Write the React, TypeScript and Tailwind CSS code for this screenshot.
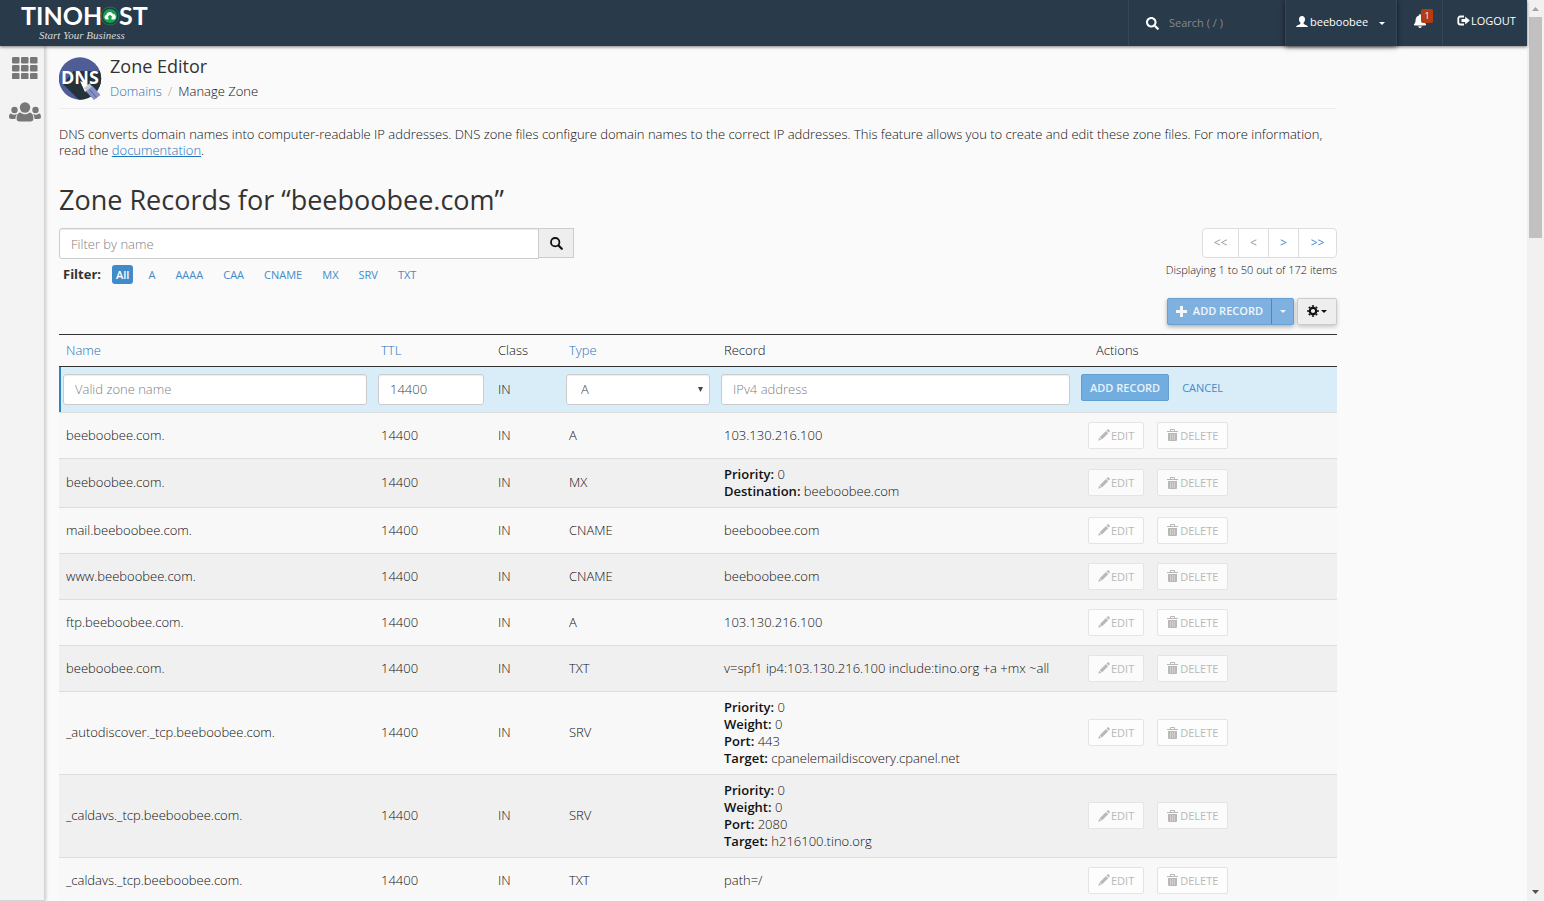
import React, { useState } from "react"
import { FaBell, FaSearch } from "react-icons/fa"

type RecordField = {
  label: string
  value: string
}

type ZoneRecord = {
  name: string
  type: string
  value?: string
  fields?: RecordField[]
}

const FILTERS = ["All", "A", "AAAA", "CAA", "CNAME", "MX", "SRV", "TXT"]

const RECORDS: ZoneRecord[] = [
  { name: "beeboobee.com.", type: "A", value: "103.130.216.100" },
  {
    name: "beeboobee.com.",
    type: "MX",
    fields: [
      { label: "Priority", value: "0" },
      { label: "Destination", value: "beeboobee.com" },
    ],
  },
  { name: "mail.beeboobee.com.", type: "CNAME", value: "beeboobee.com" },
  { name: "www.beeboobee.com.", type: "CNAME", value: "beeboobee.com" },
  { name: "ftp.beeboobee.com.", type: "A", value: "103.130.216.100" },
  {
    name: "beeboobee.com.",
    type: "TXT",
    value: "v=spf1 ip4:103.130.216.100 include:tino.org +a +mx ~all",
  },
  {
    name: "_autodiscover._tcp.beeboobee.com.",
    type: "SRV",
    fields: [
      { label: "Priority", value: "0" },
      { label: "Weight", value: "0" },
      { label: "Port", value: "443" },
      { label: "Target", value: "cpanelemaildiscovery.cpanel.net" },
    ],
  },
  {
    name: "_caldavs._tcp.beeboobee.com.",
    type: "SRV",
    fields: [
      { label: "Priority", value: "0" },
      { label: "Weight", value: "0" },
      { label: "Port", value: "2080" },
      { label: "Target", value: "h216100.tino.org" },
    ],
  },
  { name: "_caldavs._tcp.beeboobee.com.", type: "TXT", value: "path=/" },
]

const Logo = () => (
  <svg width="128" height="42" viewBox="0 0 128 42" role="img" aria-label="Tino Host">
    <g fill="#fff" fontFamily="Lato, sans-serif" fontWeight="700" fontSize="25">
      <text x="1" y="25">TINO</text>
      <text x="63" y="25">H</text>
      <text x="99" y="25">ST</text>
    </g>
    <circle cx="90" cy="16" r="9" fill="#293a4a" stroke="#1c7a4c" strokeWidth="1" />
    <circle cx="90" cy="16" r="7" fill="#16a34a" />
    <path
      d="M86.5 19.500a2.300 2.300 0 0 1-.3-4.500 3.600 3.600 0 0 1 6.800-1 2.800 2.800 0 0 1 .8 5.500h-2.300v-2.200h1.200l-2.700-2.600-2.700 2.600h1.200v2.200z"
      fill="#fff"
    />
    <text
      x="19"
      y="39"
      fill="#d5dade"
      fontFamily="'Liberation Serif', serif"
      fontStyle="italic"
      fontSize="11"
    >
      Start Your Business
    </text>
  </svg>
)

const DnsIcon = () => (
  <svg width="43" height="43" viewBox="0 0 43 43" aria-hidden="true">
    <defs>
      <clipPath id="dns-disc">
        <circle cx="21" cy="21.5" r="21.2" />
      </clipPath>
    </defs>
    <g clipPath="url(#dns-disc)">
      <rect width="43" height="43" fill="#4f5d97" />
      <path d="M4 27 15 14h28v29H20z" fill="#26323a" />
    </g>
    <text
      x="2"
      y="27"
      fill="#fff"
      fontFamily="'Open Sans', sans-serif"
      fontWeight="700"
      fontSize="18"
    >
      DNS
    </text>
    <path d="M21 24l11 5-6 6z" fill="#fff" />
    <path d="M25 31l5.500-4.500 3 3.500-5.500 4.500z" fill="#c9ccd3" />
    <path d="M27 34.500l6.500-5.500 8 9-6.500 5z" fill="#8790c4" />
    <path d="M30.500 32.500l7 8" stroke="#4f5d97" strokeWidth="1" />
  </svg>
)

const GridIcon = () => (
  <svg width="26" height="22" viewBox="0 0 26 22" fill="#777" aria-hidden="true">
    {[0, 8, 16].map((y) =>
      [0, 9, 18].map((x) => (
        <rect key={`${x}-${y}`} x={x} y={y} width="7.500" height="6.500" rx="1.300" />
      ))
    )}
  </svg>
)

const UsersIcon = () => (
  <svg width="32" height="20" viewBox="0 0 32 20" fill="#777" aria-hidden="true">
    <circle cx="5.500" cy="8" r="3.200" />
    <circle cx="26.500" cy="8" r="3.200" />
    <circle cx="16" cy="5.500" r="5.200" />
    <path d="M2 11.500c2 1.500 4 1.500 6.300.5-1.200 1.300-1.800 3-1.900 5H2.500C1 17 0 16.200 0 15c0-1.500.5-3.500 2-3.500z" />
    <path d="M30 11.500c-2 1.500-4 1.500-6.300.5 1.200 1.300 1.800 3 1.900 5h3.900c1.500 0 2.500-.8 2.500-2 0-1.500-.5-3.500-2-3.500z" />
    <path d="M11.300 10.500c3 2.400 6.400 2.400 9.400 0 2.700.3 3.700 3 3.700 6.200 0 1.700-1.100 2.800-2.900 2.800h-11c-1.800 0-2.900-1.100-2.900-2.800 0-3.200 1-5.900 3.700-6.200z" />
  </svg>
)

const UserIcon = () => (
  <svg width="12" height="12" viewBox="0 0 12 12" fill="currentColor" aria-hidden="true">
    <path d="M6 0c1.900 0 3 1.400 3 3.300 0 1.300-.5 2.600-1.400 3.300-.2.800 0 1.400.6 1.700l2.600 1.200c.8.400 1.200.8 1.200 1.500H0c0-.7.400-1.100 1.200-1.500l2.600-1.200c.6-.3.800-.9.600-1.700C3.500 5.900 3 4.600 3 3.300 3 1.400 4.100 0 6 0z" />
  </svg>
)

const LogoutIcon = () => (
  <svg width="13" height="12" viewBox="0 0 13 12" aria-hidden="true">
    <path
      d="M7 1.500H3.300A2 2 0 0 0 1.300 3.500v4a2 2 0 0 0 2 2H7"
      fill="none"
      stroke="currentColor"
      strokeWidth="1.800"
    />
    <path d="M4.500 4h3.700V1.500l4.600 4-4.600 4V7H4.500z" fill="currentColor" />
  </svg>
)

const PencilIcon = () => (
  <svg width="12" height="12" viewBox="0 0 12 12" fill="currentColor" aria-hidden="true">
    <path d="M9.400.6c.4-.4.900-.4 1.300 0l.9.900c.4.400.4.900 0 1.300l-.8.800-2.200-2.200zM8 2l2.200 2.200-6.300 6.200-2.200-2.200zM1.200 8.800l2 2L.3 11.800z" />
  </svg>
)

const TrashIcon = () => (
  <svg width="11" height="12" viewBox="0 0 11 12" aria-hidden="true">
    <path
      d="M3.500 2V.5h4V2M0 2.500h11"
      fill="none"
      stroke="currentColor"
      strokeWidth="1"
    />
    <path d="M1 4h9v7a1 1 0 0 1-1 1H2a1 1 0 0 1-1-1z" fill="currentColor" />
    <path d="M3.500 5v6M5.500 5v6M7.500 5v6" stroke="#f8f8f8" strokeWidth=".4" />
  </svg>
)

const SearchIcon = () => (
  <svg width="13" height="13" viewBox="0 0 13 13" aria-hidden="true">
    <circle cx="5.200" cy="5.200" r="4.200" fill="none" stroke="currentColor" strokeWidth="1.800" />
    <path d="M8.500 8.500l3.300 3.300" stroke="currentColor" strokeWidth="2.200" strokeLinecap="round" />
  </svg>
)

const PlusIcon = () => (
  <svg width="11" height="11" viewBox="0 0 11 11" fill="currentColor" aria-hidden="true">
    <path d="M4 0h3v4h4v3H7v4H4V7H0V4h4z" />
  </svg>
)

const GearIcon = () => (
  <svg width="12" height="12" viewBox="0 0 12 12" fill="none" stroke="currentColor" aria-hidden="true">
    <circle cx="6" cy="6" r="3.200" strokeWidth="2.200" />
    <path
      d="M6 .3v1.500M6 10.200v1.500M.3 6h1.500M10.200 6h1.500M2 2l1 1M9 9l1 1M2 10l1-1M9 3l1-1"
      strokeWidth="2.200"
    />
  </svg>
)

const Caret = () => (
  <svg width="6" height="3" viewBox="0 0 6 3" fill="currentColor" aria-hidden="true">
    <path d="M0 0h6L3 3z" />
  </svg>
)

const Header = () => (
  <header className="relative z-20 flex h-[46px] shrink-0 items-stretch bg-[#293a4a] font-normal text-white shadow-[0_1px_3px_rgba(0,0,0,0.5)]">
    <a href="#home" className="ml-5">
      <Logo />
    </a>
    <label className="ml-auto flex w-[157px] items-center gap-[10px] border-l border-[#33475a] pl-[17px]">
      <FaSearch size={13} />
      <input
        type="text"
        aria-label="Search"
        placeholder="Search ( / )"
        className="w-24 bg-transparent text-[11px] outline-none placeholder:text-[#84898e]"
      />
    </label>
    <button className="flex w-[112px] items-center gap-[2px] border-x border-[#33475a] pb-[2px] pl-[10px] text-[11px] shadow-[0_1px_5px_rgba(0,0,0,0.6)]">
      <UserIcon />
      <span>beeboobee</span>
      <span className="ml-[9px] pt-[3px]">
        <Caret />
      </span>
    </button>
    <button className="relative w-[46px] border-r border-[#33475a] pb-[5px] pl-4" aria-label="Notifications">
      <FaBell size={14} />
      <span className="absolute top-[9px] left-6 flex h-[14px] w-3 items-center justify-center rounded-[2px] bg-[#b33c12] text-[9px]">
        1
      </span>
    </button>
    <a href="#logout" className="flex w-[84px] items-center gap-px pb-1 pl-[14px] text-[11px]">
      <LogoutIcon />
      LOGOUT
    </a>
  </header>
)

const Sidebar = () => (
  <nav className="relative z-10 flex w-[45px] shrink-0 flex-col items-center gap-[23px] border-r border-b border-[#d5d5d5] bg-[#f3f3f3] pt-[11px] pl-[6px] shadow-[1px_0_3px_rgba(0,0,0,0.2)]">
    <a href="#tools" aria-label="Tools">
      <GridIcon />
    </a>
    <a href="#users" aria-label="Users">
      <UsersIcon />
    </a>
  </nav>
)

const inputClass =
  "h-[31px] w-full rounded-[3px] border border-[#ccc] bg-white px-[11px] text-[13px] text-[#444] shadow-[inset_0_1px_1px_rgba(0,0,0,0.075)] placeholder:text-[#808080]"

const AddRecordRow = () => {
  const [ttl, setTtl] = useState<string>("14400")
  const [type, setType] = useState<string>("A")

  return (
    <tr className="h-[46px] border-b border-[#ddd] bg-[#d9edf9]">
      <td className="pr-[6px] pl-1 shadow-[inset_2px_0_0_#2f86bf]">
        <input className={inputClass} aria-label="Zone name" placeholder="Valid zone name" />
      </td>
      <td className="pr-[6px] pl-[5px]">
        <input
          className={inputClass}
          aria-label="TTL"
          value={ttl}
          onChange={(e) => setTtl(e.target.value)}
        />
      </td>
      <td className="pl-2">IN</td>
      <td className="pr-[6px] pl-[5px]">
        <div className="relative">
          <select
            className={inputClass + " appearance-none pl-[14px]"}
            aria-label="Type"
            value={type}
            onChange={(e) => setType(e.target.value)}
          >
            {FILTERS.slice(1).map((option) => (
              <option key={option}>{option}</option>
            ))}
          </select>
          <svg
            className="pointer-events-none absolute top-[13px] right-[7px]"
            width="5"
            height="5"
            viewBox="0 0 5 5"
            fill="#444"
          >
            <path d="M0 0h5L2.500 5z" />
          </svg>
        </div>
      </td>
      <td className="pr-[6px] pl-[5px]">
        <input className={inputClass} aria-label="Record" placeholder="IPv4 address" />
      </td>
      <td className="pt-[7px] pl-[5px] align-top">
        <div className="flex items-center gap-[13px] text-[11px]">
          <button className="h-[27px] rounded-[2px] border border-[#629fd0] bg-[#72addf] px-2 font-semibold text-[#e8f3fb]">
            ADD RECORD
          </button>
          <button className="font-normal text-[#428bca]">CANCEL</button>
        </div>
      </td>
    </tr>
  )
}

const actionClass =
  "flex h-[27px] items-center rounded-[2px] border border-[#e4e4e4] bg-white/70 px-[9px] text-[11px] font-normal text-[#b8b8b8]"

const RecordRow = ({ record }: { record: ZoneRecord }) => (
  <tr className="h-[46px] border-b border-[#ddd] odd:bg-[#f0f0f0] even:bg-[#f8f8f8]">
    <td className="pl-[7px]">{record.name}</td>
    <td className="pl-2">14400</td>
    <td className="pl-2">IN</td>
    <td className="pl-2">{record.type}</td>
    <td className="py-[7px] pl-2">
      {record.value}
      {record.fields?.map((field) => (
        <div key={field.label}>
          <strong className="font-semibold">{field.label}:</strong> {field.value}
        </div>
      ))}
    </td>
    <td className="pl-3">
      <div className="flex gap-[13px]">
        <button className={actionClass + " gap-px"}>
          <PencilIcon />
          EDIT
        </button>
        <button className={actionClass + " gap-[2px]"}>
          <TrashIcon />
          DELETE
        </button>
      </div>
    </td>
  </tr>
)

const Pager = () => (
  <div className="flex flex-col items-end">
    <div className="flex h-[30px] divide-x divide-[#ddd] rounded-[4px] border border-[#ddd] bg-white text-xs font-normal">
      <button className="w-9 text-[#999]">&lt;&lt;</button>
      <button className="w-[30px] text-[#999]">&lt;</button>
      <button className="w-[30px] text-[#428bca]">&gt;</button>
      <button className="w-[37px] text-[#428bca]">&gt;&gt;</button>
    </div>
    <p className="mt-1 text-[11px] leading-4">Displaying 1 to 50 out of 172 items</p>
  </div>
)

const Scrollbar = () => (
  <div className="flex w-[17px] shrink-0 flex-col items-center bg-[#f1f1f1] py-[7px]" aria-hidden="true">
    <svg width="7" height="4" viewBox="0 0 7 4" fill="#a3a3a3">
      <path d="M0 4h7L3.500 0z" />
    </svg>
    <div className="mt-[6px] h-[221px] w-[13px] bg-[#c1c1c1]" />
    <svg className="mt-auto" width="7" height="4" viewBox="0 0 7 4" fill="#505050">
      <path d="M0 0h7L3.500 4z" />
    </svg>
  </div>
)

const App = () => {
  const [filter, setFilter] = useState<string>("All")

  return (
    <div className="flex h-screen overflow-hidden bg-[#fafafa] font-['Open_Sans',sans-serif] text-[13px] font-light text-[#111]">
      <div className="flex min-w-0 flex-1 flex-col">
        <Header />
        <div className="flex min-h-0 flex-1">
          <Sidebar />
          <main className="min-w-0 flex-1 overflow-hidden px-[14px]">
            <div className="max-w-[1278px]">
              <div className="flex h-[63px] items-start gap-2 border-b border-[#eee] pt-[11px]">
                <DnsIcon />
                <div>
                  <h2 className="text-lg leading-[18px] font-normal text-[#333]">Zone Editor</h2>
                  <nav className="mt-[6px] flex leading-5">
                    <a href="#domains" className="text-[#1f74bd]">Domains</a>
                    <span className="mx-[6px] text-[#aaa]">/</span>
                    <span>Manage Zone</span>
                  </nav>
                </div>
              </div>

              <p className="mt-[17px] leading-4">
                DNS converts domain names into computer-readable IP addresses. DNS zone files
                configure domain names to the correct IP addresses. This feature allows you to
                create and edit these zone files. For more information, read the{" "}
                <a href="#docs" className="text-[#1f74bd] underline">documentation</a>.
              </p>

              <h1 className="mt-[26px] text-[27px] leading-8 font-normal text-[#333]">
                Zone Records for “beeboobee.com”
              </h1>

              <div className="mt-3 flex items-start justify-between">
                <div>
                  <div className="flex w-[515px]">
                    <input
                      className={inputClass + " rounded-r-none"}
                      aria-label="Filter by name"
                      placeholder="Filter by name"
                    />
                    <button
                      className="flex h-[30px] w-[35px] shrink-0 items-center justify-center border border-l-0 border-[#ccc] bg-[#eee]"
                      aria-label="Search records"
                    >
                      <SearchIcon />
                    </button>
                  </div>
                  <div className="mt-[6px] flex items-center pl-1">
                    <span className="mr-[11px] font-bold text-[#333]">Filter:</span>
                    <div className="flex gap-[10px]">
                      {FILTERS.map((name) => (
                        <button
                          key={name}
                          onClick={() => setFilter(name)}
                          className={
                            "h-[19px] rounded-[3px] text-[11px] " +
                            (filter === name
                              ? "bg-[#428bca] px-1 font-semibold text-white"
                              : "px-[5px] font-normal text-[#428bca]")
                          }
                        >
                          {name}
                        </button>
                      ))}
                    </div>
                  </div>
                </div>
                <Pager />
              </div>

              <div className="mt-[13px] flex justify-end gap-[3px]">
                <div className="flex h-[27px] rounded-[2px] border border-[#69a0cf] bg-[#7eb1df] text-[11px] font-semibold text-[#f0f6fb] shadow-[0_2px_4px_rgba(0,0,0,0.3)]">
                  <button className="flex items-center gap-[6px] px-2">
                    <PlusIcon />
                    ADD RECORD
                  </button>
                  <button className="flex w-[22px] items-center justify-center border-l border-[#428bca]" aria-label="More record types">
                    <Caret />
                  </button>
                </div>
                <button
                  className="flex h-[27px] w-10 items-center justify-center gap-[2px] rounded-[2px] border border-[#ccc] bg-[#eee] shadow-[0_2px_4px_rgba(0,0,0,0.2)]"
                  aria-label="Settings"
                >
                  <GearIcon />
                  <Caret />
                </button>
              </div>

              <table className="mt-[9px] w-full table-fixed border-collapse text-left leading-[17px]">
                <colgroup>
                  <col className="w-[314px]" />
                  <col className="w-[117px]" />
                  <col className="w-[71px]" />
                  <col className="w-[155px]" />
                  <col />
                  <col className="w-[261px]" />
                </colgroup>
                <thead>
                  <tr className="h-8 border-y border-[#333] [&>th]:font-light">
                    <th className="pl-[7px]">
                      <a href="#name" className="text-[#1f74bd]">Name</a>
                    </th>
                    <th className="pl-2">
                      <a href="#ttl" className="text-[#1f74bd]">TTL</a>
                    </th>
                    <th className="pl-2">Class</th>
                    <th className="pl-2">
                      <a href="#type" className="text-[#1f74bd]">Type</a>
                    </th>
                    <th className="pl-2">Record</th>
                    <th className="pl-5">Actions</th>
                  </tr>
                </thead>
                <tbody>
                  <AddRecordRow />
                  {RECORDS.map((record, idx) => (
                    <RecordRow key={idx} record={record} />
                  ))}
                </tbody>
              </table>
            </div>
          </main>
        </div>
      </div>
      <Scrollbar />
    </div>
  )
}

export default App
